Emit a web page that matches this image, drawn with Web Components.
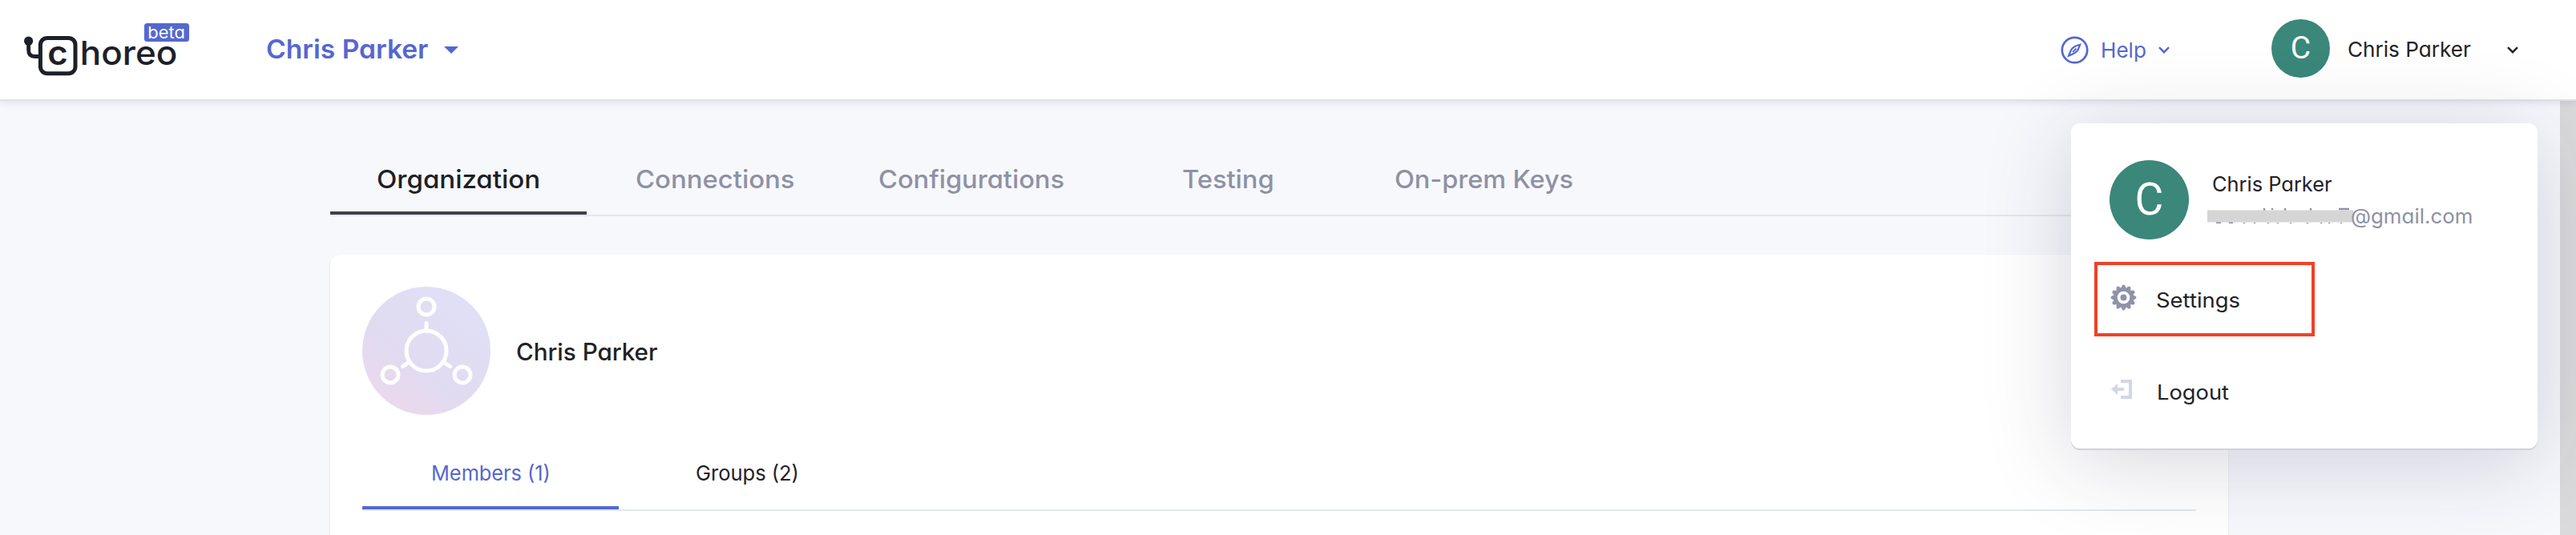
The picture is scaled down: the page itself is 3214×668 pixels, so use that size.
<!DOCTYPE html>
<html lang="en">
<head>
<meta charset="utf-8">
<title>Choreo</title>
<style>
html,body{margin:0;height:668px;overflow:hidden;background:#f7f8fc;font-family:Inter,"Liberation Sans",sans-serif;color:#222228}
</style>
</head>
<body>
<choreo-app></choreo-app>
<script>
const define = (name, html, ready) => {
  const tpl = document.createElement('template');
  tpl.innerHTML = html;
  customElements.define(name, class extends HTMLElement {
    connectedCallback() {
      if (this.shadowRoot) return;
      this.attachShadow({mode: 'open'}).append(tpl.content.cloneNode(true));
      if (ready) ready.call(this, this.shadowRoot);
    }
  });
};

// A single line, widened so that its ink spans the given width.
const pen = document.createElement('canvas').getContext('2d');
define('ui-label', `<style>
  :host{display:block;flex:none;white-space:nowrap;line-height:1.25;font-feature-settings:"cv11" 1}
  span{display:inline-block;transform-origin:0 50%}
</style><span></span>`, function (root) {
  const span = root.querySelector('span'), w = +this.getAttribute('w'), text = this.getAttribute('text');
  this.style.fontSize = this.getAttribute('size') + 'px';
  this.style.fontWeight = this.getAttribute('weight') || 400;
  this.style.width = w + 'px';
  span.textContent = text;
  const cs = getComputedStyle(span);
  pen.font = `${cs.fontWeight} ${cs.fontSize} ${cs.fontFamily}`;
  const m = pen.measureText(text), left = -m.actualBoundingBoxLeft, right = m.width - m.actualBoundingBoxRight;
  const ink = span.getBoundingClientRect().width - left - right;
  const k = w / ink;
  span.style.transform = `scaleX(${k})`;
  span.style.marginLeft = -left * k + 'px';
});

define('choreo-logo', `<style>:host{display:block;flex:none;width:210px;height:70px}svg{display:block}text{font-family:Inter,sans-serif}</style>
<svg width="210" height="70" viewBox="30 28 210 70">
  <rect x="50.4" y="48.4" width="43.6" height="44.4" rx="8.5" fill="none" stroke="#1d2028" stroke-width="5"/>
  <circle cx="35.6" cy="52.2" r="5.6" fill="#1d2028"/>
  <path d="M35.6 52v11.500q0 8 8 8H50" fill="none" stroke="#1d2028" stroke-width="4.8"/>
  <text x="59.200" y="82" font-size="41" font-weight="600" fill="#1d2028" textLength="25.500" lengthAdjust="spacingAndGlyphs">c</text>
  <text x="99.800" y="82" font-size="41.500" font-weight="500" fill="#1d2028" textLength="121.500" lengthAdjust="spacingAndGlyphs">horeo</text>
  <rect x="180" y="30" width="56" height="23" rx="3.500" fill="#5668cf"/>
  <text x="184.300" y="48.700" font-size="20.500" font-weight="400" fill="#fff" textLength="46.500" lengthAdjust="spacingAndGlyphs" style="font-feature-settings:'cv11' 1">beta</text>
</svg>`);

define('ui-chevron', `<style>:host{display:block;flex:none;width:14px;height:9px}svg{display:block}</style>
<svg width="14" height="9" fill="none" stroke="currentColor" stroke-width="2.4"><path d="M1 1.200 7 7.200 13 1.200"/></svg>`);

define('user-avatar', `<style>
  :host{display:flex;flex:none;align-items:center;justify-content:center;border-radius:50%;background:#3b877a;color:#fff;font-family:Roboto,sans-serif;line-height:1}
</style><slot></slot>`);

define('app-header', `<style>
  :host{display:flex;align-items:center;height:124px;background:#fff;border-bottom:2px solid #dfe0e8;box-shadow:0 1px 10px rgba(40,40,70,.13);position:relative;padding-left:30px}
  .org{display:flex;align-items:center;gap:19px;margin-left:93px;color:#5567d0}
  .spacer{flex:1}
  .help{display:flex;align-items:center;color:#5567d0;width:263px}
  .help svg{margin-right:17px}
  .help ui-label{margin-top:3px}
  .help ui-chevron{margin-left:16px}
  .user{display:flex;align-items:center;width:380px}
  user-avatar{width:73px;height:73px;font-size:39px;margin:-3px 23px 0 0}
  .user ui-chevron{margin-left:45px}
  .user ui-label{margin-top:0}
</style>
<choreo-logo></choreo-logo>
<div class="org"><ui-label text="Chris Parker" size="32.500" weight="600" w="201.500"></ui-label>
<svg width="18" height="9"><path d="M0 0h18L9 9z" fill="#5567d0"/></svg></div>
<div class="spacer"></div>
<div class="help"><svg width="35" height="35" fill="none" stroke="#5567d0"><circle cx="17.500" cy="17.500" r="15.700" stroke-width="2.700"/><path d="M24.200 10.800q-8.500 2-11.200 6.700l-3 7.200q8.700-3 11.400-7z" stroke-width="2.200"/><path d="M15 20l4.500-4.500" stroke-width="1.800"/></svg>
<ui-label text="Help" size="26" w="54"></ui-label><ui-chevron></ui-chevron></div>
<div class="user"><user-avatar>C</user-avatar><ui-label text="Chris Parker" size="26" w="153"></ui-label><ui-chevron></ui-chevron></div>`);

define('tab-item', `<style>
  :host{display:flex;align-items:center;justify-content:center;box-sizing:border-box;width:320px;height:100%;padding-top:3px;border-bottom:4px solid transparent;color:var(--tab-idle)}
  :host([active]){color:var(--tab-active);border-color:var(--tab-line)}
</style><slot></slot>`);
define('tab-bar', `<style>:host{display:flex;border-bottom:2px solid var(--rule)}</style><slot></slot>`);

define('org-card', `<style>
  :host{display:block;box-sizing:border-box;height:380px;padding:40px 40px 0;background:#fff;border-radius:12px;box-shadow:0 1px 2px rgba(40,40,70,.16)}
  .head{display:flex;align-items:center;gap:33px;height:160px}
  .head ui-label{margin-top:3px;color:#222}
  tab-bar{height:88px;margin-top:30px;--rule:#e3e8ec;--tab-idle:#222228;--tab-active:#5567d0;--tab-line:#5567d0}
</style>
<div class="head">
<svg width="160" height="160"><defs><linearGradient id="g" x1=".15" y1=".9" x2=".75" y2=".15"><stop stop-color="#ebd9ed"/><stop offset=".4" stop-color="#e1dbf1"/><stop offset="1" stop-color="#e0dff5"/></linearGradient></defs>
<circle cx="80" cy="80" r="80" fill="url(#g)"/><g fill="none" stroke="#fff" stroke-width="5" stroke-linecap="round"><circle cx="80" cy="80" r="25"/><circle cx="80" cy="25" r="10"/><circle cx="35" cy="110" r="10"/><circle cx="125" cy="110" r="10"/><path d="M80 45.500V54M58 94.500l-7.500 5M102 94.500l7.500 5"/></g></svg>
<ui-label text="Chris Parker" size="29.500" weight="500" w="175"></ui-label></div>
<tab-bar><tab-item active><ui-label text="Members (1)" size="26" w="144.500"></ui-label></tab-item><tab-item><ui-label text="Groups (2)" size="26" w="125.500"></ui-label></tab-item></tab-bar>`);

define('account-menu', `<style>
  :host{display:block;box-sizing:border-box;width:582px;height:406px;border-radius:11px;background:#fff;box-shadow:0 2px 0 #d0d0da,0 16px 110px rgba(35,35,75,.19)}
  .who{display:flex;align-items:center;gap:30px;padding:46px 0 0 48px}
  user-avatar{width:99px;height:99px;font-size:55px;line-height:1.05}
  .lines{display:flex;flex-direction:column;gap:7px}
  .mail{display:flex;color:#8d91a5;margin-left:-7px}
  .mail ui-label{margin:1px 0 0 -2px}
  .row{display:flex;align-items:center;position:relative;height:116px}
  .row ui-label{margin-top:3px}
  .set{margin-top:18px;height:113px;padding-left:50px;gap:25px}
  .out{padding-left:50px;gap:33px}
  .box{position:absolute;left:29px;top:10px;width:267px;height:85px;box-sizing:content-box;outline:0;border:4px solid #f04027;box-sizing:border-box;width:275px;height:93px}
</style>
<div class="who"><user-avatar>C</user-avatar><div class="lines">
<ui-label text="Chris Parker" size="25.500" w="149"></ui-label>
<div class="mail"><svg width="182" height="32"><g stroke="#8d91a5" stroke-width="2.400"><path d="M71 7v4M81 7v2M97 7v4M129 7v4M164 8h13M76 25v1M46 25v1M59 25v1M88 25v1M104 25v1M125 25v1M142 25v1M152 25v1M167 25v1"/><path d="M11 25h6M27 25h5" stroke-width="2"/></g><rect y="9.500" width="182" height="15" fill="#d5d5d5"/></svg>
<ui-label text="@gmail.com" size="25.500" w="150"></ui-label></div></div></div>
<div class="row set"><svg style="margin-top:-5px;margin-left:-1px" width="33" height="33" viewBox="-16.500 -16.500 33 33"><g fill="#9093a8" id="teeth"></g><circle r="10" fill="none" stroke="#9093a8" stroke-width="5"/><circle r="7.800" fill="#fff"/><circle r="4" fill="#9093a8"/></svg>
<ui-label text="Settings" size="25.500" w="103.500"></ui-label><div class="box"></div></div>
<div class="row out"><svg style="margin-top:-4px" width="26" height="24"><path d="M12 2H24V22H12M7 12H16" fill="none" stroke="#d3d7e2" stroke-width="4"/><path d="M0 12 8 5V19z" fill="#d3d7e2"/></svg>
<ui-label text="Logout" size="25.500" w="87.500"></ui-label></div>`, function (root) {
  let s = '';
  for (let i = 0; i < 12; i++) s += `<path transform="rotate(${i * 30})" d="M10.500-3.800 15.300-1.600Q16.600 0 15.300 1.600L10.500 3.800z"/>`;
  root.querySelector('#teeth').innerHTML = s;
});

define('choreo-app', `<style>
  :host{display:block;width:3214px;height:668px;position:relative;overflow:hidden}
  .body{display:flex;height:542px}
  main{flex:1;padding:54px 414px 0 412px}
  .rail{width:20px;background:#dadadc}
  .main-tabs{height:88px;margin-bottom:48px;--rule:#e6e7ec;--tab-idle:#8e91a4;--tab-active:#1d2024;--tab-line:#40404b}
  account-menu{position:absolute;left:2584px;top:154px}
</style>
<app-header></app-header>
<div class="body"><main>
<tab-bar class="main-tabs">
<tab-item active><ui-label text="Organization" size="31.500" weight="500" w="201"></ui-label></tab-item>
<tab-item><ui-label text="Connections" size="31.500" weight="500" w="196.500"></ui-label></tab-item>
<tab-item><ui-label text="Configurations" size="31.500" weight="500" w="230"></ui-label></tab-item>
<tab-item><ui-label text="Testing" size="31.500" weight="500" w="112"></ui-label></tab-item>
<tab-item><ui-label text="On-prem Keys" size="31.500" weight="500" w="221"></ui-label></tab-item>
</tab-bar>
<org-card></org-card></main><div class="rail"></div></div>
<account-menu></account-menu>`);
</script>
</body>
</html>
